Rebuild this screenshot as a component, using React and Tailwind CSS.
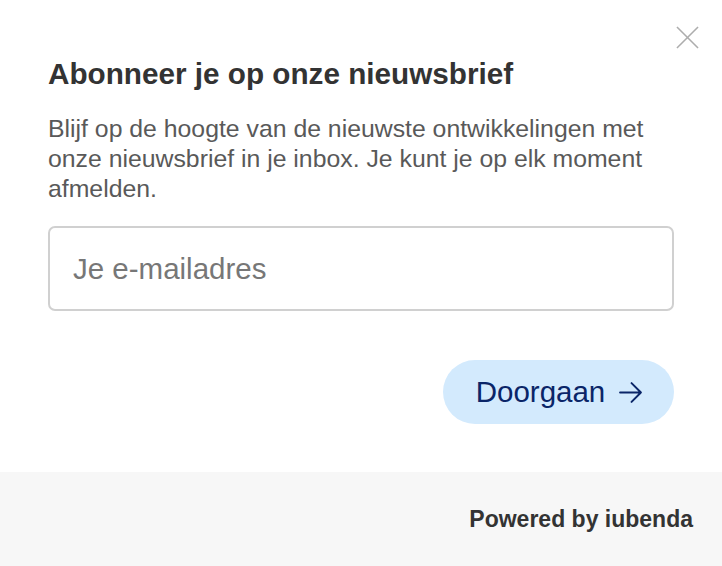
import React from 'react'

export default function App() {
  return (
    <div className="w-[722px] h-[566px] flex flex-col bg-white" style={{ fontFamily: '"Liberation Sans", Arial, sans-serif' }}>
      <div className="relative flex-1 px-12 pt-[56px]">
        <button className="absolute top-[26px] right-[23px] w-[23px] h-[23px] text-[#adadad]" aria-label="Sluiten">
          <svg viewBox="0 0 24 24" width="23" height="23" fill="none" stroke="currentColor" strokeWidth="1.6">
            <path d="M1 1 L23 23 M23 1 L1 23" />
          </svg>
        </button>
        <h2 className="text-[29.7px] leading-[36px] font-bold text-[#333]">Abonneer je op onze nieuwsbrief</h2>
        <p className="mt-[22px] text-[24.8px] leading-[30px] text-[#595959]">
          Blijf op de hoogte van de nieuwste ontwikkelingen met onze nieuwsbrief in je inbox. Je kunt je op elk moment afmelden.
        </p>
        <input
          type="email"
          placeholder="Je e-mailadres"
          className="mt-[22px] w-full h-[85px] px-[23px] border-2 border-[#d0d0d0] rounded-[7px] text-[29.5px] text-[#333] placeholder:text-[#777] outline-none"
        />
        <div className="flex justify-end mt-[49px]">
          <button className="h-[64px] w-[231px] pl-[2px] rounded-full bg-[#d3eafd] text-[#0a2568] text-[29.5px] flex items-center justify-center gap-[13px]">
            Doorgaan
            <svg viewBox="0 0 24 24" width="25" height="25" fill="none" stroke="currentColor" strokeWidth="1.9" strokeLinecap="round" strokeLinejoin="round">
              <path d="M2 12 H22 M13 3 L22 12 L13 21" />
            </svg>
          </button>
        </div>
      </div>
      <div className="h-[94px] bg-[#f7f7f7] flex items-center justify-end pr-[29px]">
        <span className="text-[23px] font-bold text-[#333]">Powered by iubenda</span>
      </div>
    </div>
  )
}
